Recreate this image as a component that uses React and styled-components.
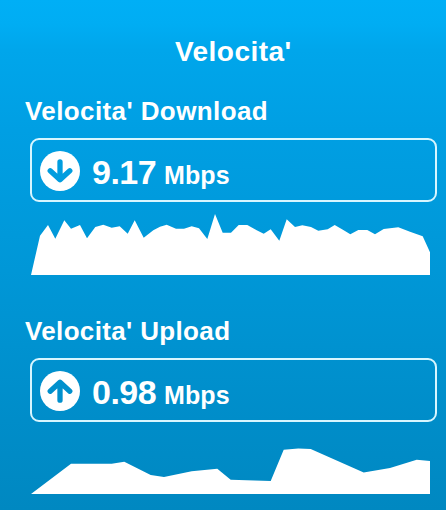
import React from 'react'
import styled, { createGlobalStyle } from 'styled-components'

const GlobalStyle = createGlobalStyle`
    body{
        margin: 0px;
    }
`

const Screen = styled.div`
    box-sizing: border-box;
    width: 100%;
    height: 510px;
    padding: 35px 9px 0px 25px;
    overflow: hidden;
    color: white;
    font-family: 'Liberation Sans', Arial, sans-serif;
    font-weight: 700;
    background: linear-gradient(#00aff6 0px, #00adf3 24px, #00a6eb 50px, #009fe3 130px, #0097d7 270px, #008dc9 420px, #0088c1 510px);
`
const Title = styled.h1`
    margin: 0px 0px 26px 150px;
    font-size: 28px;
    line-height: 34px;
    letter-spacing: .45px;
`
const Section = styled.section`
    height: 220px;
`
const Heading = styled.h2`
    margin: 0px;
    font-size: 26px;
    line-height: 32px;
    letter-spacing: ${props => props.$spacing}px;
    white-space: nowrap;
`
const Box = styled.div`
    box-sizing: border-box;
    display: flex;
    align-items: center;
    height: 64px;
    margin: 11px 0px 0px 5px;
    padding: 2px 0px 0px 8px;
    border: 2px solid #d8f6ff;
    border-radius: 9px;
`
const Badge = styled.svg`
    display: block;
    width: 40px;
    height: 40px;
    margin-right: 12px;
`
const Reading = styled.p`
    display: flex;
    align-items: baseline;
    margin: 0px;
    padding-top: 5px;
    line-height: 40px;
`
const Value = styled.span`
    width: 72px;
    font-size: 34px;
    letter-spacing: -.5px;
`
const Unit = styled.span`
    font-size: 25px;
    letter-spacing: .1px;
`
const Graph = styled.svg`
    display: block;
    width: 399px;
    height: 70px;
    margin: ${props => props.$top}px 0px 0px 6px;
`

// [x, height above the baseline]
const download = [
    [9, 39.3], [17, 50], [24.3, 36.3], [33.3, 54.7], [40, 46.3], [49, 50], [56, 36.7], [64.3, 48],
    [72.3, 50.3], [80.7, 47.3], [88.7, 48.7], [96.7, 41.3], [103.7, 54.7], [112.7, 37.3], [122.3, 44.7],
    [129, 48.3], [135.7, 50.3], [145, 46.3], [153, 46.3], [160.7, 48.7], [168, 46.7], [176.3, 36],
    [184, 61], [191.7, 42.3], [200, 42.3], [207.7, 50], [216.3, 50], [225.7, 44.7], [232.7, 41.3],
    [239.7, 45.7], [248.3, 34.3], [255.7, 55.7], [264, 48], [271.3, 49.7], [280, 48], [287.3, 44.3],
    [296.7, 45.7], [303.7, 50], [312.3, 45], [319.3, 40.7], [327.3, 45], [336.3, 45], [344, 40.7],
    [352.7, 46], [367.3, 47.7], [379, 43.3], [391.7, 38.7], [399, 22.7]
]
const upload = [
    [40, 30.3], [80.7, 30.3], [93.3, 32.3], [119.7, 19], [133, 17], [160.7, 22.7], [186.3, 25.3],
    [199.7, 14.3], [239.7, 13], [252.7, 44.3], [267.3, 45.6], [279.7, 45], [332.7, 21.6], [359, 26],
    [385.7, 34.3], [399, 33]
]

function Arrow(props) {
    return (
        <Badge viewBox='0 0 40 40'>
            <circle cx='20' cy='20' r='20' fill='white' />
            <path
                d='M20 10.8V28M10.2 19.8L20 28.7L29.8 19.8'
                transform={props.up ? 'rotate(180 20 20)' : undefined}
                fill='none'
                stroke={props.color}
                strokeWidth='5.3'
                strokeLinecap='round'
                strokeLinejoin='round'
            />
        </Badge>
    )
}

function Speed(props) {
    const line = props.data.map(([x, h]) => x + ',' + (70 - h)).join(' ')
    return (
        <Section>
            <Heading $spacing={props.spacing}>{props.title}</Heading>
            <Box>
                <Arrow up={props.up} color={props.color} />
                <Reading>
                    <Value>{props.value}</Value>
                    <Unit>Mbps</Unit>
                </Reading>
            </Box>
            <Graph $top={props.graphTop} viewBox='0 0 399 70'>
                <polygon points={'0,70 ' + line + ' 399,70'} fill='white' />
            </Graph>
        </Section>
    )
}

export default function App() {
    return (
        <Screen>
            <GlobalStyle />
            <Title>Velocita'</Title>
            <Speed title="Velocita' Download" value='9.17' data={download} color='#009ddf' spacing={.4} graphTop={3} />
            <Speed title="Velocita' Upload" value='0.98' data={upload} color='#0090cd' spacing={.35} graphTop={2} up />
        </Screen>
    )
}
